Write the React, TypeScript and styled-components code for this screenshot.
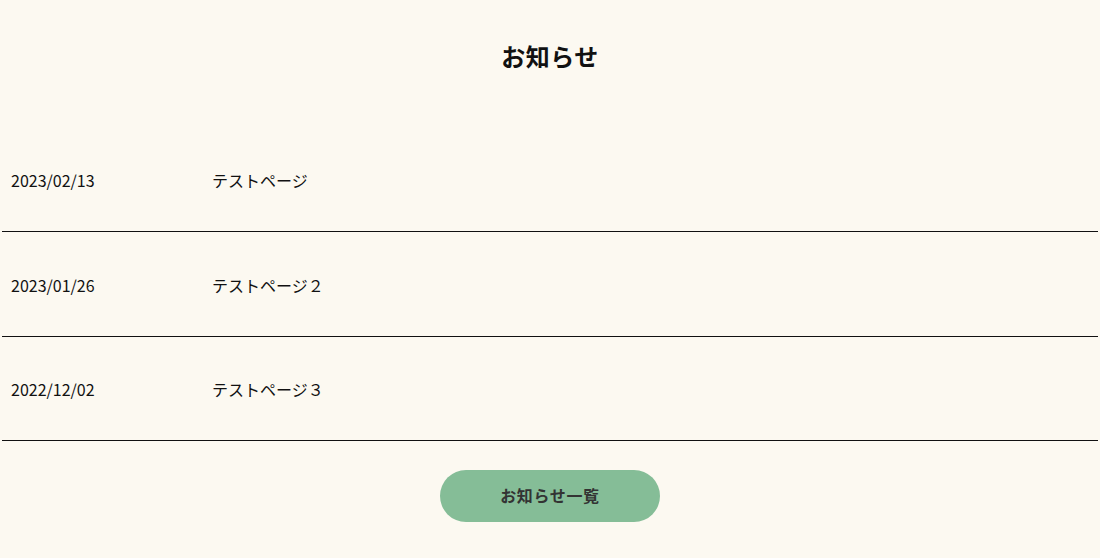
import styled, { createGlobalStyle } from "styled-components";

const GlobalStyle = createGlobalStyle`
  html, body {
    margin: 0;
    padding: 0;
    background: #fcf9f1;
  }
  body {
    font-family: "Noto Sans CJK JP", "Noto Sans", sans-serif;
    color: #111;
  }
`;

const Section = styled.section`
  padding: 38px 2px 36px;
  display: flex;
  flex-direction: column;
  align-items: center;
`;

const Heading = styled.h2`
  margin: 0;
  font-size: 24px;
  font-weight: 700;
  line-height: 36px;
  letter-spacing: 0.02em;
`;

const NewsList = styled.ul`
  list-style: none;
  margin: 53.5px 0 0;
  padding: 0;
  width: 100%;
`;

const NewsRow = styled.li`
  display: flex;
  align-items: center;
  height: 104.5px;
  padding: 2px 9px 0;
  box-sizing: border-box;
  border-bottom: 1px solid #111;
  font-size: 16px;
`;

const NewsDate = styled.span`
  width: 201px;
  flex-shrink: 0;
`;

const NewsTitle = styled.a`
  color: inherit;
  text-decoration: none;
`;

const MoreButton = styled.a`
  display: flex;
  align-items: center;
  justify-content: center;
  margin-top: 29px;
  width: 220px;
  height: 52px;
  padding-bottom: 3px;
  box-sizing: border-box;
  border-radius: 26px;
  background: #85bd97;
  color: #333;
  font-size: 16px;
  font-weight: 700;
  letter-spacing: 0.04em;
  text-decoration: none;
`;

const news = [
  { date: "2023/02/13", title: "テストページ" },
  { date: "2023/01/26", title: "テストページ２" },
  { date: "2022/12/02", title: "テストページ３" },
];

export default function App() {
  return (
    <>
      <GlobalStyle />
      <Section>
        <Heading>お知らせ</Heading>
        <NewsList>
          {news.map((item) => (
            <NewsRow key={item.date}>
              <NewsDate>{item.date}</NewsDate>
              <NewsTitle href="#">{item.title}</NewsTitle>
            </NewsRow>
          ))}
        </NewsList>
        <MoreButton href="#">お知らせ一覧</MoreButton>
      </Section>
    </>
  );
}
